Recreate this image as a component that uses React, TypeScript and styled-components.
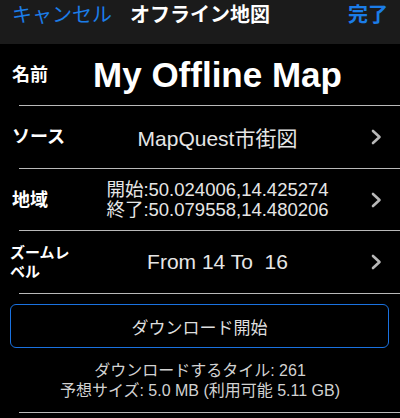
import React from "react";
import styled, { createGlobalStyle } from "styled-components";

const GlobalStyle = createGlobalStyle`
  html, body {
    margin: 0;
    padding: 0;
    background: #000;
  }
  body {
    font-family: "Liberation Sans", "Noto Sans CJK JP", sans-serif;
    color: #fff;
  }
`;

const Page = styled.div`
  width: 400px;
  height: 418px;
  overflow: hidden;
  background: #000;
`;

const NavBar = styled.div`
  height: 44px;
  box-sizing: border-box;
  padding: 3px 12px 0;
  background: #1b1b1b;
  display: grid;
  grid-template-columns: 1fr auto 1fr;
  align-items: start;
  font-size: 20px;
  line-height: 25px;
`;

const NavButton = styled.span<{ $bold?: boolean; $right?: boolean }>`
  color: #1b7de8;
  font-weight: ${(p) => (p.$bold ? 700 : 400)};
  justify-self: ${(p) => (p.$right ? "end" : "start")};
`;

const NavTitle = styled.span`
  font-weight: 700;
  color: #fff;
`;

const Row = styled.div<{ $height: number }>`
  height: ${(p) => p.$height}px;
  padding-left: 12px;
  display: grid;
  grid-template-columns: 68px 1fr 45px;
  align-items: center;
`;

const Label = styled.div<{ $small?: boolean }>`
  font-weight: 700;
  font-size: ${(p) => (p.$small ? 15 : 18)}px;
  line-height: ${(p) => (p.$small ? 19 : 22)}px;
  margin-left: ${(p) => (p.$small ? -2 : 0)}px;
`;

const Value = styled.div<{ $size: number; $bold?: boolean; $lh?: number }>`
  text-align: center;
  font-size: ${(p) => p.$size}px;
  font-weight: ${(p) => (p.$bold ? 700 : 400)};
  line-height: ${(p) => (p.$lh ? `${p.$lh}px` : "normal")};
  color: ${(p) => (p.$bold ? "#fff" : "#e6e6e6")};
  white-space: pre;
`;

const Chevron = styled.svg`
  justify-self: start;
  margin-left: 16px;
`;

const Separator = styled.div`
  height: 1px;
  margin-left: 19px;
  background: #b9b9b9;
`;

const ActionButton = styled.button`
  display: block;
  box-sizing: border-box;
  width: 379px;
  height: 44px;
  margin: 10px 0 0 10px;
  background: transparent;
  border: 1.5px solid #1a72e0;
  border-radius: 6px;
  color: #dedede;
  font-family: inherit;
  font-size: 17px;
`;

const Info = styled.div`
  margin: 13px 0 11px;
  text-align: center;
  font-size: 16px;
  line-height: 20px;
  color: #d2d2d2;
`;

const Arrow = () => (
  <Chevron width="11" height="16" viewBox="0 0 11 16">
    <polyline points="2,2 8.5,8 2,14" fill="none" stroke="#b8b8b8" strokeWidth="2.6" strokeLinecap="round" strokeLinejoin="round" />
  </Chevron>
);

export default function App() {
  return (
    <Page>
      <GlobalStyle />
      <NavBar>
        <NavButton>キャンセル</NavButton>
        <NavTitle>オフライン地図</NavTitle>
        <NavButton $bold $right>
          完了
        </NavButton>
      </NavBar>

      <Row $height={61}>
        <Label>名前</Label>
        <Value $size={35} $bold>
          My Offline Map
        </Value>
      </Row>
      <Separator />

      <Row $height={62}>
        <Label>ソース</Label>
        <Value $size={21}>MapQuest市街図</Value>
        <Arrow />
      </Row>
      <Separator />

      <Row $height={61}>
        <Label>地域</Label>
        <Value $size={18.5} $lh={19.5}>
          {"開始:50.024006,14.425274\n終了:50.079558,14.480206"}
        </Value>
        <Arrow />
      </Row>
      <Separator />

      <Row $height={62}>
        <Label $small>ズームレベル</Label>
        <Value $size={21}>From 14 To  16</Value>
        <Arrow />
      </Row>
      <Separator />

      <ActionButton>ダウンロード開始</ActionButton>

      <Info>
        ダウンロードするタイル: 261
        <br />
        予想サイズ: 5.0 MB (利用可能 5.11 GB)
      </Info>
      <Separator />
    </Page>
  );
}
